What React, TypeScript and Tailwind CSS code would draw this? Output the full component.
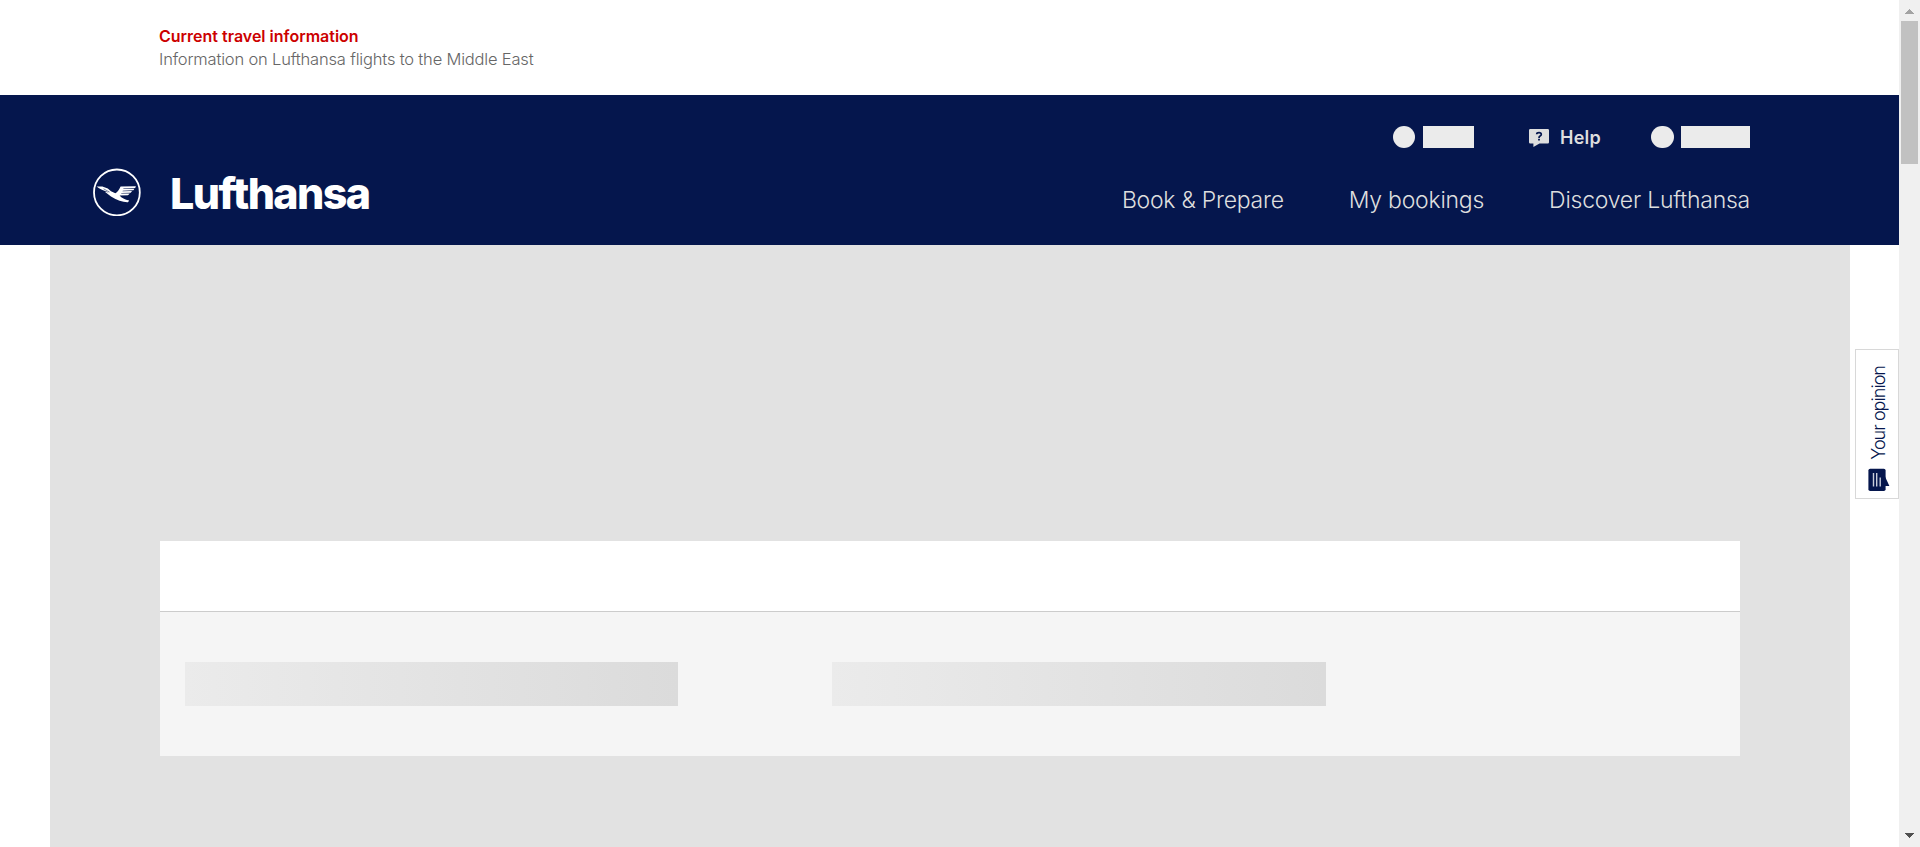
function LogoMark() {
  return (
    <svg className="h-12 w-12 shrink-0" viewBox="0 0 48 48" fill="none">
      <circle cx="23.9" cy="24.4" r="22.9" stroke="#fff" strokeWidth="1.8" />
      <path
        fill="#fff"
        d="M3.6 18.6 L9.4 18.4 L14.8 20.6 L18 23.2 L22.3 25.2 Q24.6 25 27.6 18.6 L42.9 18.2 L42.2 19.9 L30.5 20.5 L30.3 21.1 L41.4 20.7 L40.4 22.3 L29.8 22.8 L29.5 23.3 L39 23.1 L37.8 24.8 L28.4 25 L28.2 25.5 L36.8 25.5 L35 27.2 L26.6 27.4 Q29.5 31 36.2 32.4 L35 34.3 Q27.5 34.6 18 28.6 L11.8 23.8 L16 24.4 L9.4 22 L6 20.2 Z"
      />
      <path d="M10.5 20.8 L16.6 24.1" stroke="#05164d" strokeWidth="0.5" />
    </svg>
  );
}

function HelpIcon() {
  return (
    <svg className="h-[22px] w-5 shrink-0" viewBox="0 0 20 22">
      <path
        fill="#dedede"
        d="M1.2 3 H18.8 Q20 3 20 4.2 V16.3 Q20 17.5 18.8 17.5 H10.5 L4.4 21 V17.5 H1.2 Q0 17.5 0 16.3 V4.2 Q0 3 1.2 3 Z"
      />
      <path
        d="M7.7 8.3 Q7.8 6.7 10 6.7 Q12.3 6.7 12.3 8.4 Q12.3 9.4 11.1 10 Q10 10.6 10 11.9"
        fill="none"
        stroke="#05164d"
        strokeWidth="1.7"
      />
      <rect x="9.1" y="12.8" width="1.8" height="1.7" fill="#05164d" />
    </svg>
  );
}

function OpinionIcon() {
  return (
    <svg className="block h-6 w-[22px] shrink-0" viewBox="0 0 22 24">
      <rect x="0.4" y="0.8" width="17.2" height="22.2" rx="1.8" fill="#05164d" />
      <path d="M17 8.5 L21.4 18 L17 18 Z" fill="#05164d" />
      <path d="M5.5 5 V18.6 M8.7 5 V18.6 M12.2 9.6 V18.6" stroke="#c9cddb" strokeWidth="1.4" />
    </svg>
  );
}

function Scrollbar() {
  return (
    <div className="flex w-[21px] shrink-0 flex-col items-center bg-[#f0f0f0]">
      <div className="flex h-[21px] w-full items-start justify-center pt-[9px]">
        <svg className="h-[5px] w-[9px]" viewBox="0 0 9 5" shapeRendering="crispEdges">
          <path d="M0 5 L4.5 0 L9 5 Z" fill="#a3a3a3" />
        </svg>
      </div>
      <div className="mr-px h-[143px] w-[17px] bg-[#c1c1c1]" />
      <svg className="mt-auto mb-[9px] h-[5px] w-[9px]" viewBox="0 0 9 5" shapeRendering="crispEdges">
        <path d="M0 0 L9 0 L4.5 5 Z" fill="#505050" />
      </svg>
    </div>
  );
}

function Header() {
  return (
    <header className="flex h-[150px] justify-between bg-[#05164d] pr-[149px] pl-[93px]">
      <div className="mt-[73px] flex h-12 items-center">
        <LogoMark />
        <span className="mt-0.5 ml-[29px] text-[43px] leading-[48px] font-extrabold tracking-[-1.6px] text-white">
          Lufthansa
        </span>
      </div>
      <div className="flex flex-col items-end pt-[31px]">
        <div className="flex h-[22px] items-center">
          <div className="h-[22px] w-[22px] rounded-full bg-[#ebebeb]" />
          <div className="ml-2 h-[22px] w-[51px] bg-[#ebebeb]" />
          <a className="mr-[50px] ml-[55px] flex items-center gap-[11px]">
            <HelpIcon />
            <span className="pt-px text-[18px] leading-[22px] font-semibold tracking-[0.25px] text-[#dedede]">Help</span>
          </a>
          <div className="h-[22px] w-[23px] rounded-full bg-[#ebebeb]" />
          <div className="ml-[7px] h-[22px] w-[69px] bg-[#ebebeb]" />
        </div>
        <nav className="mt-[38px] flex gap-[65px] text-[23px] leading-7 font-light tracking-[-0.24px] text-[#dedede]">
          <a>Book &amp; Prepare</a>
          <a>My bookings</a>
          <a>Discover Lufthansa</a>
        </nav>
      </div>
    </header>
  );
}

export default function App() {
  return (
    <div className="relative flex h-[847px] w-[1920px] overflow-hidden bg-white font-['Inter',sans-serif] whitespace-nowrap">
      <div className="flex min-w-0 flex-1 flex-col">
        <section className="h-[95px] pt-6 pl-[159px]">
          <h2 className="text-[16px] leading-6 font-semibold text-[#cc0000]">Current travel information</h2>
          <p className="text-[16.5px] leading-[22px] font-light tracking-[-0.18px] text-[#666]">
            Information on Lufthansa flights to the Middle East
          </p>
        </section>
        <Header />
        <main className="mr-[49px] ml-[50px] flex-1 bg-[#e2e2e2] px-[110px] pt-[296px]">
          <div className="h-[70px] bg-white" />
          <div className="flex h-[145px] gap-[154px] border-t border-[#ccc] bg-[#f5f5f5] pt-[50px] pl-[25px]">
            <div className="h-11 w-[493px] bg-linear-to-r from-[#ebebeb] to-[#dbdbdb]" />
            <div className="h-11 w-[494px] bg-linear-to-r from-[#ebebeb] to-[#dbdbdb]" />
          </div>
        </main>
      </div>
      <Scrollbar />
      <button className="absolute top-[349px] left-[1855px] flex h-[150px] w-11 flex-col items-center justify-end border border-[#d8d8d8] bg-white pb-[6px]">
        <span className="ml-[3px] rotate-180 text-[18px] leading-6 font-light tracking-[-0.95px] text-[#05164d] [writing-mode:vertical-rl]">
          Your opinion
        </span>
        <span className="mt-2 ml-[3px]">
          <OpinionIcon />
        </span>
      </button>
    </div>
  );
}
